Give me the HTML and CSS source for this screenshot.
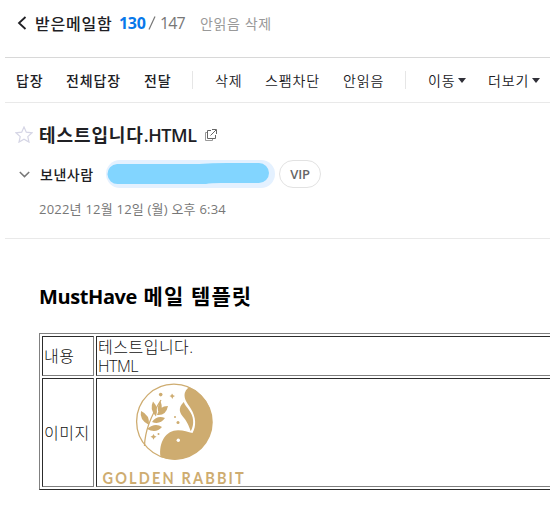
FILE: index.html
```html
<!DOCTYPE html>
<html lang="ko">
<head>
<meta charset="utf-8">
<title>받은메일함</title>
<link rel="stylesheet" href="styles.css">
</head>
<body>
<main class="mail">
  <header class="mailbox">
    <svg class="back" width="10" height="14" viewBox="0 0 10 14"><path d="M8.500 1 2 7l6.500 6"/></svg>
    <span class="folder">받은메일함</span><b class="unread">130</b><svg class="slash" width="8" height="14" viewBox="0 0 8 14"><path d="M7 .500 1 13.500"/></svg><span class="total">147</span><span class="clear">안읽음 삭제</span>
  </header>
  <nav class="toolbar">
    <span class="strong reply">답장</span><span class="strong reply-all">전체답장</span><span class="strong forward">전달</span>
    <i class="divider"></i>
    <span class="delete">삭제</span><span class="spam">스팸차단</span><span class="mark">안읽음</span>
    <i class="divider second"></i>
    <span class="move">이동</span><svg class="caret" width="8" height="5"><path d="M0 0h8L4 5z"/></svg>
    <span class="more">더보기</span><svg class="caret" width="8" height="5"><path d="M0 0h8L4 5z"/></svg>
  </nav>
  <section class="info">
    <div class="subject">
      <svg class="star" width="18" height="17" viewBox="0 0 18 17"><path d="m9 1 2.300 5.200 5.700.600-4.200 3.800 1.200 5.500L9 13.200l-5 2.900 1.200-5.500L1 6.800l5.700-.600z"/></svg>
      <h1>테스트입니다<span class="ext">.HTML</span></h1>
      <svg class="popup" width="12" height="12" viewBox="0 0 12 12"><path class="behind" d="M2.500 3.500h-2v8h7v-2"/><path d="M6 1.500H2.500v8h8V6M7 .500h4.500V5M11 1 5.500 6.500"/></svg>
    </div>
    <div class="sender">
      <svg class="chevron" width="11" height="7" viewBox="0 0 11 7"><path d="m.8 1 4.700 4.600L10.200 1"/></svg>
      <span class="label">보낸사람</span>
      <span class="address"><svg width="163" height="22" viewBox="0 0 163 22"><path d="M10 1h82Q105 0 120 0h32a10 10 0 0 1 0 20h-38q-10 0-15 1H11A10 10 0 0 1 10 1z"/></svg></span>
      <span class="vip">VIP</span>
    </div>
    <div class="date">2022년 12월 12일 (월) 오후 6:34</div>
  </section>
  <article class="body">
    <h2><span class="brand">MustHave</span> 메일 템플릿</h2>
    <table>
      <tr class="content"><td class="name">내용</td><td><div class="line">테스트입니다.</div><div class="line latin">HTML</div></td></tr>
      <tr class="image"><td class="name">이미지</td><td>
        <svg class="logo" width="160" height="107" viewBox="97 379 160 107">
          <circle cx="173.900" cy="421.500" r="37.300" fill="none" stroke="#ceac70" stroke-width="1.300"/>
          <path d="M189.500 387.200A37.700 37.700 0 0 1 160.500 457C158.500 442 166 430.200 178 430.200C184 430.200 188 432 192.500 433C196.500 426 196 417 191 409C189 405 184.500 401 184.500 395Q185 389.500 189.500 387.200z"/>
          <path d="M183.800 402C177.500 408 179.500 413 184 418C188 423 189.500 428 190.800 431.200C194.800 424 193.500 416 189.300 410.500C187 407 184.500 405 183.800 402z"/>
          <path d="M144.500 446Q145 425 161 400" fill="none" stroke="#ceac70" stroke-width="1.300"/>
          <path d="M160.500 401q-5 7-1 13q4-5 1-13zM153 401.500q-4 8 3 15q3-9-3-15zM141 411q-2 9 8 14q1-10-8-14zM168 406q-9 0-11 9q9 1 11-9zM165 418q-8-3-13 4q8 3 13-4zM162 427q-7-5-15 2q9 5 15-2z"/>
          <path d="m172 393.500 1.200 1.700 1.800.800-1.800.900-.900 2.100-1-2-1.800-1 1.700-.800zM153.500 434l1 1.800 2 1-2 1-1 2-1-2-2-1 2-1z"/>
          <circle cx="160.700" cy="394.600" r="1.800"/><circle cx="175" cy="417" r="1"/><circle cx="178" cy="422.500" r="1.500"/><circle cx="158.500" cy="434" r="1"/>
          <circle class="eye" cx="178.300" cy="440.300" r="1.700"/>
          <text transform="translate(102.500 483.700) scale(.88 1)">GOLDEN RABBIT</text>
        </svg>
      </td></tr>
    </table>
  </article>
</main>
</body>
</html>
```
FILE: styles.css
```css
* { box-sizing: border-box; }
body { margin: 0; background: #fff; overflow: hidden; color: #202024; font-family: "Open Sans", "Noto Sans CJK KR", sans-serif; }
svg { display: block; flex: none; }
.mail { width: 545px; height: 512px; margin-left: 5px; overflow: hidden; }
.mailbox, .toolbar, .subject, .sender { display: flex; align-items: center; white-space: nowrap; }
.mailbox { height: 58px; padding: 0 0 12px 12px; border-bottom: 1px solid #d8d8d8; font-size: 16px; }
.back { fill: none; stroke: #202024; stroke-width: 1.8; }
.folder { width: 84px; margin-left: 8px; font-weight: 500; letter-spacing: .8px; }
.unread { width: 29px; color: #0878ea; letter-spacing: -.3px; }
.slash { margin-right: 4px; fill: none; stroke: #777; stroke-width: 1.2; }
.total { width: 40px; color: #777; font-size: 16px; letter-spacing: -.9px; }
.clear { color: #999; font-size: 14px; letter-spacing: .6px; }
.toolbar { height: 45px; padding-left: 11px; border-bottom: 1px solid #e9e9e9; font-size: 14px; letter-spacing: .9px; }
.toolbar span { flex: none; }
.strong { font-weight: 500; }
.reply { width: 50px; }
.reply-all { width: 78px; }
.forward { width: 48px; }
.divider { flex: none; width: 1px; height: 18px; margin-right: 22px; background: #e6e6e6; }
.toolbar .delete, .toolbar .spam, .toolbar .mark, .toolbar .move, .toolbar .more { font-weight: 350; }
.delete { width: 50px; }
.spam { width: 78px; }
.mark { width: 62px; }
.move { width: 30px; }
.more { width: 44px; margin-left: 22px; }
.caret { fill: #303038; }
.info { height: 136px; border-bottom: 1px solid #e9e9e9; }
.subject { height: 46px; padding: 17px 0 0 10px; }
.star { fill: none; stroke: #d5d5e5; stroke-width: 1.2; }
h1 { width: 159px; margin: 0 0 0 6px; font-size: 18px; line-height: 28px; font-weight: 600; letter-spacing: .9px; }
.ext { letter-spacing: -.45px; }
.popup { margin-left: 7px; fill: none; stroke: #666; }
.behind { stroke: #999; }
.sender { height: 28px; margin-top: 11px; padding-left: 14px; }
.chevron { fill: none; stroke: #777; stroke-width: 1.5; }
.label { width: 66px; margin-left: 10px; font-size: 14px; font-weight: 500; letter-spacing: .5px; }
.address { display: flex; align-items: center; width: 169px; height: 28px; padding-left: 1px; border-radius: 14px; background: #e4f1ff; fill: #82d5ff; }
.vip { width: 42px; height: 28px; margin-left: 4px; border: 1px solid #e2e2e2; border-radius: 14px; color: #666; font-size: 13px; font-weight: 600; line-height: 26px; text-align: center; letter-spacing: -.2px; }
.date { margin: 11px 0 0 34px; color: #777; font-size: 13px; line-height: 20px; letter-spacing: .22px; white-space: nowrap; }
.body { padding-left: 34px; color: #000; }
h2 { margin: 0; padding-top: 41px; height: 94px; font-size: 21px; line-height: 32px; font-weight: 700; letter-spacing: 1.1px; white-space: nowrap; }
.brand { font-size: 20px; letter-spacing: -.4px; }
table { width: 650px; height: 157px; border: 1px solid; border-color: #808080 #2c2c2c #2c2c2c #808080; border-spacing: 2px; table-layout: fixed; font-size: 16px; line-height: 19px; letter-spacing: .5px; }
td { padding: 0 0 0 1px; border: 1px solid; border-color: #2c2c2c #808080 #808080 #2c2c2c; color: #111; font-weight: 300; vertical-align: middle; }
.name { width: 52px; white-space: nowrap; }
.line { height: 19px; line-height: 20px; }
.latin { letter-spacing: -.5px; }
.content { height: 40px; }
.image { height: 109px; }
.image td:last-child { padding: 0; }
.image .name { padding-top: 2px; }
.logo { fill: #ceac70; }
.eye { fill: #fff; }
.logo text { font: 700 16.500px Lato, sans-serif; letter-spacing: 2.450px; }
```
